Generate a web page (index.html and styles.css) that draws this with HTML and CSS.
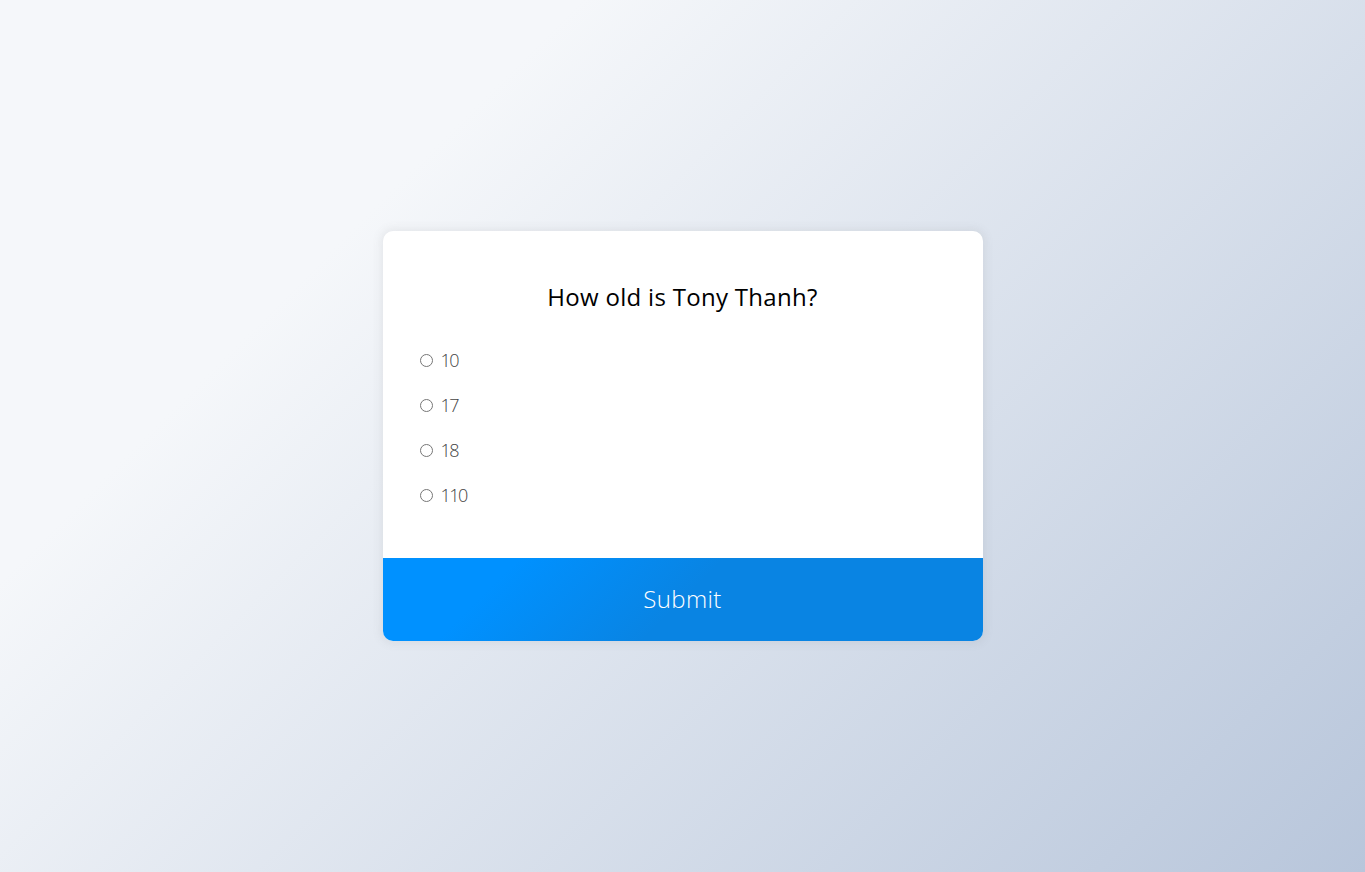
FILE: index.html
```html
<!DOCTYPE html>
<html lang="en">
<head>
<meta charset="UTF-8">
<title>Quiz</title>
<link rel="stylesheet" href="styles.css">
</head>
<body>
  <div class="quiz-container">
    <div class="quiz-header">
      <h2 class="question">How old is Tony Thanh?</h2>
      <ul class="answers">
        <li class="answer"><input type="radio" name="answer" id="a"><label for="a">10</label></li>
        <li class="answer"><input type="radio" name="answer" id="b"><label for="b">17</label></li>
        <li class="answer"><input type="radio" name="answer" id="c"><label for="c">18</label></li>
        <li class="answer"><input type="radio" name="answer" id="d"><label for="d">110</label></li>
      </ul>
    </div>
    <button class="submit">Submit</button>
  </div>
</body>
</html>
```

FILE: styles.css
```css
* { box-sizing: border-box; }
html, body { height: 100%; }
body {
  margin: 0;
  background-color: #b8c6db;
  background-image: linear-gradient(315deg, #b8c6db 0%, #f5f7fa 74%);
  font-family: "Open Sans", "Noto Sans", sans-serif;
  display: flex;
  align-items: center;
  justify-content: center;
  overflow: hidden;
}
.quiz-container {
  background-color: #fff;
  border-radius: 10px;
  box-shadow: 0 0 10px 2px rgba(100, 100, 100, 0.1);
  width: 600px;
  overflow: hidden;
}
.quiz-header {
  padding: 48px 32px 49px;
}
.question {
  margin: 0;
  font-size: 24px;
  line-height: 36px;
  font-weight: 400;
  text-align: center;
  color: #000;
  letter-spacing: 0.3px;
}
.answers {
  list-style: none;
  margin: 32px 0 0;
  padding: 0;
  display: flex;
  flex-direction: column;
  gap: 18px;
}
.answer {
  display: flex;
  align-items: center;
  font-size: 18px;
  line-height: 27px;
  font-weight: 300;
  color: #444;
  letter-spacing: -1.5px;
}
.answer input {
  margin: 0 8px 0 5px;
  width: 13px;
  height: 13px;
}
.answer label { cursor: pointer; }
.submit {
  display: block;
  width: 100%;
  height: 83px;
  border: none;
  padding: 0 0 3px;
  cursor: pointer;
  color: #fff;
  font-family: inherit;
  font-size: 24px;
  font-weight: 300;
  letter-spacing: 0.4px;
  background: linear-gradient(135deg, #0091ff 20%, #0984e3 50%);
}
```
